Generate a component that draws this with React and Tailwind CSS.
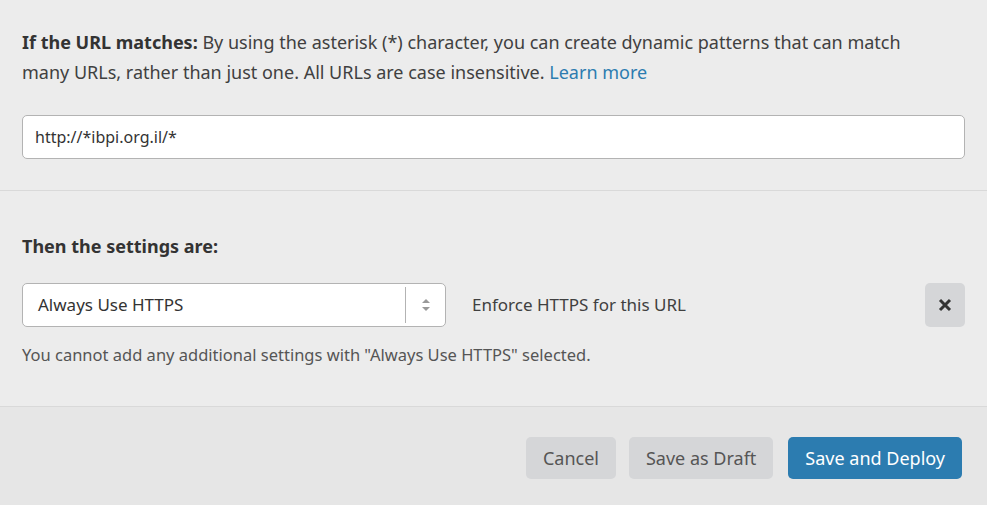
export default function App() {
  const font = { fontFamily: '"Segoe UI","Noto Sans",sans-serif' };
  return (
    <div style={font} className="w-[987px] h-[505px] bg-[#ececec] text-[#333] text-[18px] overflow-hidden">
      <div className="px-[22px] pt-[27px] pb-[31px] border-b border-[#d9d9d9]">
        <p className="leading-[30px] text-[#404040] pr-[30px]">
          <b className="text-[#333]">If the URL matches:</b> By using the asterisk (*) character, you can create dynamic patterns that can match many URLs, rather than just one. All URLs are case insensitive. <a className="text-[#2c7cb0]">Learn more</a>
        </p>
        <div className="mt-[28px] h-[44px] bg-white border border-[#b3b3b3] rounded-[5px] flex items-center px-[12px] text-[16px] text-[#333]">http://*ibpi.org.il/*</div>
      </div>
      <div className="px-[22px] pt-[40px] pb-[36px] border-b border-[#d9d9d9]">
        <div className="font-bold leading-[30px]">Then the settings are:</div>
        <div className="mt-[22px] flex items-center">
          <div className="w-[424px] h-[44px] bg-white border border-[#b3b3b3] rounded-[5px] flex items-center">
            <span className="flex-1 pl-[15px] text-[#333] text-[17px]">Always Use HTTPS</span>
            <div className="w-[40px] h-[36px] border-l border-[#b3b3b3] flex items-center justify-center">
              <svg width="10" height="14" viewBox="0 0 10 14"><path d="M5 1 L9 5 H1 Z M5 13 L9 9 H1 Z" fill="#999"/></svg>
            </div>
          </div>
          <span className="ml-[26px] flex-1 text-[#404040] text-[17px]">Enforce HTTPS for this URL</span>
          <div className="w-[40px] h-[44px] bg-[#d5d6d8] rounded-[5px] flex items-center justify-center">
            <svg width="14" height="14" viewBox="0 0 14 14"><path d="M2 2 L12 12 M12 2 L2 12" stroke="#333" strokeWidth="3"/></svg>
          </div>
        </div>
        <p className="mt-[13px] text-[16.5px] leading-[30px] text-[#555]">You cannot add any additional settings with "Always Use HTTPS" selected.</p>
      </div>
      <div className="bg-[#e6e6e6] h-full px-[25px] pt-[30px] flex justify-end gap-[13px]">
        <button className="h-[42px] px-[17px] rounded-[5px] bg-[#d5d6d8] text-[#555]">Cancel</button>
        <button className="h-[42px] px-[17px] rounded-[5px] bg-[#d5d6d8] text-[#555]">Save as Draft</button>
        <button className="h-[42px] px-[17px] rounded-[5px] bg-[#2c7cb0] text-white ml-[2px]">Save and Deploy</button>
      </div>
    </div>
  );
}
